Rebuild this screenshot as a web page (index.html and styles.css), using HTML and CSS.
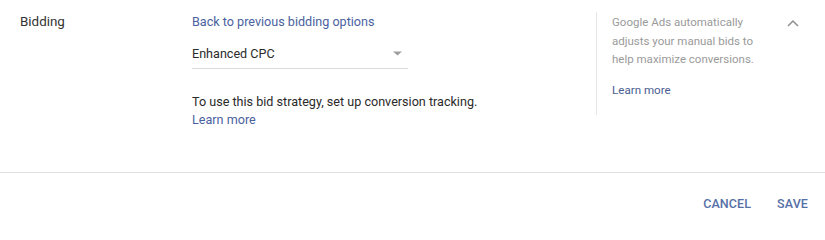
FILE: index.html
```html
<!DOCTYPE html>
<html>
<head>
<meta charset="utf-8">
<link rel="stylesheet" href="styles.css">
</head>
<body>
<div class="panel">
  <div class="content">
    <div class="label">Bidding</div>
    <div class="main">
      <a class="link back">Back to previous bidding options</a>
      <div class="select">
        <span class="select-value">Enhanced CPC</span>
        <svg class="caret" width="9" height="5" viewBox="0 0 9 5"><path d="M0 0.5 L9 0.5 L4.5 4.5 Z" fill="#9e9e9e"/></svg>
      </div>
      <div class="note">
        <div>To use this bid strategy, set up conversion tracking.</div>
        <a class="link">Learn more</a>
      </div>
    </div>
    <div class="help">
      <div class="help-text">Google Ads automatically adjusts your manual bids to help maximize conversions.</div>
      <a class="link help-link">Learn more</a>
    </div>
    <div class="toggle">
      <svg width="12" height="8" viewBox="0 0 12 8"><path d="M1 7 L6 2 L11 7" fill="none" stroke="#8f8f8f" stroke-width="1.5"/></svg>
    </div>
  </div>
  <div class="actions">
    <button class="btn">CANCEL</button>
    <button class="btn">SAVE</button>
  </div>
</div>
</body>
</html>
```

FILE: styles.css
```css
html, body {
  margin: 0;
  padding: 0;
  background: #fff;
}
body {
  font-family: Roboto, "Liberation Sans", Arial, sans-serif;
  font-size: 12.6px;
  color: #2a2a2a;
}
.panel {
  width: 825px;
}
.content {
  display: flex;
  align-items: flex-start;
  padding: 12px 0 0 0;
  height: 173px;
  border-bottom: 1px solid #e0e0e0;
  box-sizing: border-box;
}
.label {
  width: 192px;
  padding-left: 20px;
  box-sizing: border-box;
  font-size: 13.4px;
  line-height: 20px;
  color: #333;
}
.main {
  width: 404px;
  display: flex;
  flex-direction: column;
}
.link {
  color: #4a62a0;
  text-decoration: none;
  cursor: pointer;
}
.back {
  line-height: 19px;
}
.select {
  width: 216px;
  height: 30px;
  margin-top: 8px;
  border-bottom: 1px solid #dadada;
  display: flex;
  align-items: center;
  justify-content: space-between;
  box-sizing: border-box;
  padding-right: 6px;
}
.select-value {
  color: #2a2a2a;
}
.caret {
  display: block;
}
.note {
  margin-top: 24px;
  line-height: 18px;
}
.help {
  width: 175px;
  border-left: 1px solid #e6e6e6;
  padding-left: 15px;
  height: 103px;
  font-size: 11.5px;
  line-height: 18.5px;
  color: #9a9a9a;
  box-sizing: content-box;
}
.help-text {
  width: 150px;
  padding-top: 1px;
}
.help-link {
  display: block;
  margin-top: 12px;
  font-size: 11.6px;
  color: #4a5d8f;
}
.toggle {
  margin-top: 7px;
  width: 16px;
}
.toggle svg {
  display: block;
}
.actions {
  display: flex;
  justify-content: flex-end;
  padding: 20px 6px 0 0;
  gap: 4px;
}
.btn {
  background: none;
  border: none;
  font-family: Roboto, "Liberation Sans", Arial, sans-serif;
  font-size: 12.5px;
  font-weight: 500;
  color: #5670a6;
  padding: 4px 11px;
  line-height: 14px;
  letter-spacing: 0.1px;
  cursor: pointer;
}
```
